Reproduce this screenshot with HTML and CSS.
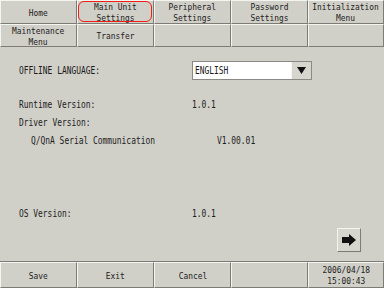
FILE: index.html
```html
<!DOCTYPE html>
<html lang="en">
  <head>
    <meta charset="UTF-8" />
    <title>Main Unit Settings</title>
    <link rel="stylesheet" href="styles.css">
  </head>
  <body>
    <div class="screen">
      <div class="tabs">
        <div class="btn"><span class="t">Home</span></div>
        <div class="btn sel"><span class="t">Main Unit<br>Settings</span></div>
        <div class="btn"><span class="t">Peripheral<br>Settings</span></div>
        <div class="btn"><span class="t">Password<br>Settings</span></div>
        <div class="btn"><span class="t">Initialization<br>Menu</span></div>
        <div class="btn"><span class="t">Maintenance<br>Menu</span></div>
        <div class="btn"><span class="t">Transfer</span></div>
        <div class="btn"></div>
        <div class="btn"></div>
        <div class="btn"></div>
      </div>

      <div class="panel">
        <div class="row lang">
          <span class="label"><span class="t">OFFLINE LANGUAGE:</span></span>
          <div class="select">
            <span class="value"><span class="t">ENGLISH</span></span>
            <span class="drop">
              <svg width="9" height="7" viewBox="0 0 9 7"><path d="M0 0h9L4.5 7z" fill="#111"/></svg>
            </span>
          </div>
        </div>

        <div class="row info first">
          <span class="label"><span class="t">Runtime Version:</span></span>
          <span class="t">1.0.1</span>
        </div>
        <div class="row info">
          <span class="label"><span class="t">Driver Version:</span></span>
        </div>
        <div class="row info">
          <span class="label sub"><span class="t">Q/QnA Serial Communication</span></span>
          <span class="t">V1.00.01</span>
        </div>

        <div class="row info os">
          <span class="label"><span class="t">OS Version:</span></span>
          <span class="t">1.0.1</span>
        </div>

        <div class="next-row">
          <div class="arrow">
            <svg width="14" height="12" viewBox="0 0 14 12"><path d="M0 3h7V0l7 6-7 6V9H0z" fill="#111"/></svg>
          </div>
        </div>
      </div>

      <div class="bar">
        <div class="btn"><span class="t">Save</span></div>
        <div class="btn"><span class="t">Exit</span></div>
        <div class="btn"><span class="t">Cancel</span></div>
        <div class="btn"></div>
        <div class="btn clock"><span class="t">2006/04/18<br>15:00:43</span></div>
      </div>
    </div>
  </body>
</html>
```

FILE: styles.css
```css
body {
  margin: 0;
  background: #d0cfc8;
}

.screen {
  width: 384px;
  height: 288px;
  display: flex;
  flex-direction: column;
  background: #d0cfc8;
  color: #1c1c1c;
  font-family: "DejaVu Sans Mono", "Liberation Mono", monospace;
  font-size: 11px;
  line-height: 13px;
  overflow: hidden;
}

/* narrow bitmap-like text */
.t {
  display: inline-block;
  transform: scaleX(0.72);
  transform-origin: left center;
  white-space: nowrap;
}

.tabs {
  display: grid;
  grid-template-columns: 77px 77px 77px 77px 76px;
  grid-template-rows: 24px 23px;
}

.btn {
  position: relative;
  display: flex;
  align-items: center;
  justify-content: center;
  text-align: center;
  font-size: 9.4px;
  line-height: 11px;
  background: #d0cfc8;
  border-top: 1px solid #f4f4f0;
  border-left: 1px solid #f4f4f0;
  border-right: 1px solid #7c7b76;
  border-bottom: 1px solid #7c7b76;
}

.btn .t {
  transform: scaleX(0.84);
  transform-origin: center;
}

.btn.sel::after {
  content: "";
  position: absolute;
  top: 0;
  left: 0;
  right: 1px;
  bottom: 1px;
  border: 1.5px solid #f01e14;
  border-radius: 6px;
}

.panel {
  flex: 1;
  padding: 14px 0 0 19px;
  display: flex;
  flex-direction: column;
}

.row {
  display: flex;
  align-items: center;
}

.label {
  width: 173px;
  flex: none;
}

.lang {
  height: 19px;
}

.select {
  width: 120px;
  height: 19px;
  display: flex;
  border: 1px solid #8a8985;
  box-sizing: border-box;
  background: #fff;
}

.value {
  flex: 1;
  display: flex;
  align-items: center;
  padding-left: 2px;
}

.drop {
  width: 19px;
  display: flex;
  align-items: center;
  justify-content: center;
  background: #d6d5ce;
  border-left: 1px solid #f4f4f0;
}

.info {
  height: 18px;
}

.info.first {
  margin-top: 15px;
}

.label.sub {
  padding-left: 12px;
  width: 186px;
}

.info.os {
  margin-top: 55px;
}

.next-row {
  display: flex;
  justify-content: flex-end;
  padding-right: 23px;
  margin-top: 6px;
}

.arrow {
  width: 24px;
  height: 24px;
  box-sizing: border-box;
  display: flex;
  align-items: center;
  justify-content: center;
  background: #d6d5ce;
  border-top: 1px solid #f4f4f0;
  border-left: 1px solid #f4f4f0;
  border-right: 1px solid #7c7b76;
  border-bottom: 1px solid #7c7b76;
}

.bar {
  display: grid;
  grid-template-columns: 77px 77px 77px 77px 76px;
  height: 26px;
  border-top: 1px solid #7c7b76;
}
```
